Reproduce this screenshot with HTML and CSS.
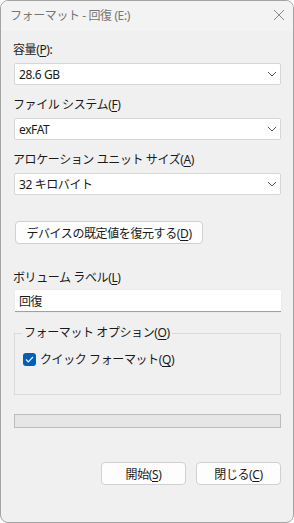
FILE: index.html
```html
<!DOCTYPE html>
<html lang="ja">
<head>
    <meta charset="UTF-8" />
    <title>フォーマット - 回復 (E:)</title>
    <link rel="stylesheet" href="styles.css">
</head>
<body>
    <div class="window">
        <div class="titlebar">
            <span class="title">フォーマット - 回復 (E:)</span>
            <svg class="close" width="12" height="12" viewBox="0 0 12 12">
                <path d="M1 1 L11 11 M11 1 L1 11" stroke="#8a8a8a" stroke-width="1" fill="none" />
            </svg>
        </div>
        <div class="content">
            <div class="label first">容量(<u>P</u>):</div>
            <div class="combo">
                <span>28.6 GB</span>
                <svg class="chev" width="10" height="6" viewBox="0 0 10 6"><path d="M1 1 L5 5 L9 1" stroke="#555" fill="none" /></svg>
            </div>

            <div class="label">ファイル システム(<u>F</u>)</div>
            <div class="combo">
                <span>exFAT</span>
                <svg class="chev" width="10" height="6" viewBox="0 0 10 6"><path d="M1 1 L5 5 L9 1" stroke="#555" fill="none" /></svg>
            </div>

            <div class="label">アロケーション ユニット サイズ(<u>A</u>)</div>
            <div class="combo">
                <span>32 キロバイト</span>
                <svg class="chev" width="10" height="6" viewBox="0 0 10 6"><path d="M1 1 L5 5 L9 1" stroke="#555" fill="none" /></svg>
            </div>

            <button class="btn restore">デバイスの既定値を復元する(<u>D</u>)</button>

            <div class="label volume">ボリューム ラベル(<u>L</u>)</div>
            <div class="textbox">回復</div>

            <fieldset class="group">
                <legend>フォーマット オプション(<u>O</u>)</legend>
                <div class="check-row">
                    <span class="checkbox">
                        <svg width="9" height="7" viewBox="0 0 9 7"><path d="M1 3.5 L3.3 5.8 L8 1" stroke="#fff" stroke-width="1.2" fill="none" /></svg>
                    </span>
                    <span>クイック フォーマット(<u>Q</u>)</span>
                </div>
            </fieldset>

            <div class="progress"></div>

            <div class="actions">
                <button class="btn action">開始(<u>S</u>)</button>
                <button class="btn action">閉じる(<u>C</u>)</button>
            </div>
        </div>
    </div>
</body>
</html>
```

FILE: styles.css
```css
* {
    box-sizing: border-box;
}
body {
    margin: 0;
    background-color: #ffffff;
    font-family: 'Noto Sans', 'Noto Sans CJK JP', sans-serif;
    font-size: 12px;
    letter-spacing: -0.4px;
    color: #1a1a1a;
}
.window {
    width: 294px;
    height: 523px;
    border: 1px solid #a3a3a3;
    border-radius: 8px;
    background-color: #f0f0f0;
    overflow: hidden;
}
.titlebar {
    height: 30px;
    background-color: #f3f3f3;
    display: flex;
    align-items: center;
    justify-content: space-between;
    padding: 0 8px 2px 9px;
}
.title {
    color: #767676;
    font-size: 12px;
}
.content {
    padding: 0 12px 0 12px;
    display: flex;
    flex-direction: column;
}
.label {
    line-height: 16px;
    margin-top: 12px;
    margin-bottom: 5px;
}
.label.first {
    margin-top: 11px;
}
.label.volume {
    margin-top: 26px;
    margin-bottom: 4px;
}
u {
    text-decoration-thickness: 1px;
    text-underline-offset: 2px;
}
.combo {
    height: 22px;
    background-color: #ffffff;
    border: 1px solid #d6d6d6;
    border-radius: 2px;
    display: flex;
    align-items: center;
    justify-content: space-between;
    padding: 0 3px 0 4px;
    margin-left: 1px;
}
.btn {
    font-family: inherit;
    font-size: 12px;
    letter-spacing: -0.4px;
    color: #1a1a1a;
    background-color: #fdfdfd;
    border: 1px solid #d0d0d0;
    border-radius: 4px;
    height: 23px;
    padding: 0;
}
.restore {
    width: 188px;
    margin-top: 26px;
    margin-left: 2px;
}
.textbox {
    height: 22px;
    background-color: #ffffff;
    border-bottom: 1px solid #a0a0a0;
    box-shadow: 0 0 0 1px #ececec;
    padding: 0 4px;
    display: flex;
    align-items: center;
    margin-left: 2px;
}
.group {
    margin: 13px 0 0 1px;
    padding: 9px 8px 0 8px;
    border: 1px solid #dadada;
    height: 70px;
}
.group legend {
    padding: 0 2px;
    margin-left: -1px;
    line-height: 16px;
}
.check-row {
    display: flex;
    align-items: center;
    gap: 4px;
}
.checkbox {
    width: 13px;
    height: 13px;
    background-color: #005fb8;
    border-radius: 3px;
    display: flex;
    align-items: center;
    justify-content: center;
}
.progress {
    height: 14px;
    margin: 19px 0 0 1px;
    background-color: #e6e6e6;
    border: 1px solid #bcbcbc;
}
.actions {
    display: flex;
    justify-content: flex-end;
    gap: 10px;
    margin-top: 34px;
}
.action {
    width: 85px;
}
```
